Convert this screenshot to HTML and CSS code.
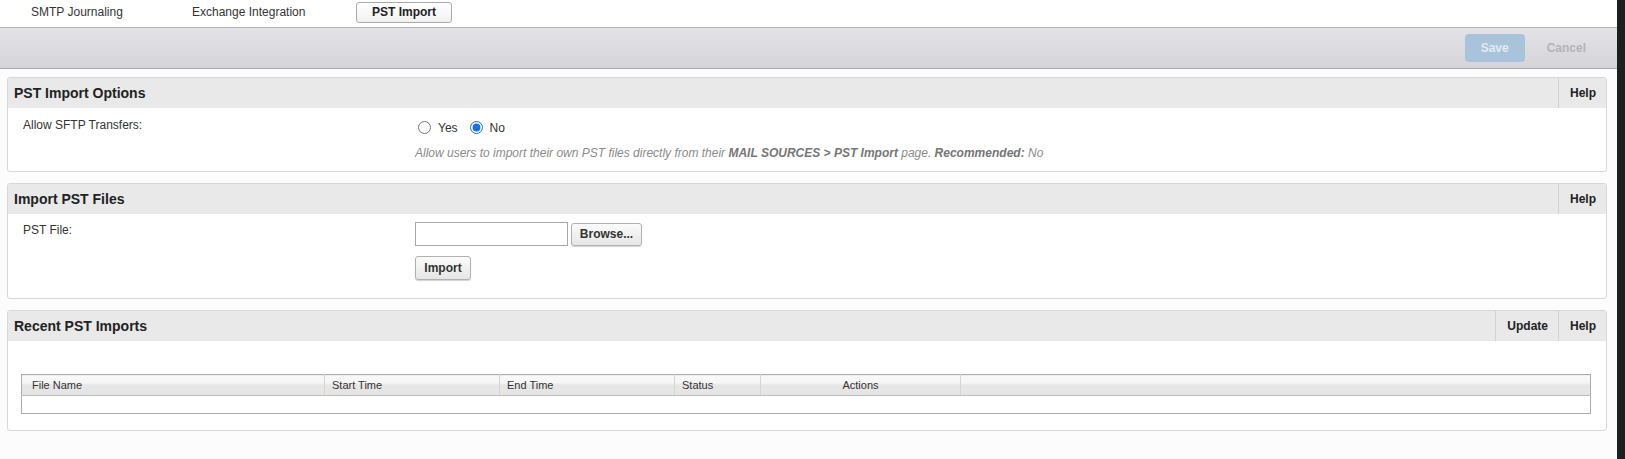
FILE: index.html
```html
<!DOCTYPE html>
<html>
<head>
<meta charset="utf-8">
<title>PST Import</title>
<link rel="stylesheet" href="styles.css">
</head>
<body>
<div class="page">
  <nav class="tabs">
    <span class="tab">SMTP Journaling</span>
    <span class="tab">Exchange Integration</span>
    <span class="tab tab-active">PST Import</span>
  </nav>
  <div class="toolbar">
    <button class="btn-save" type="button">Save</button>
    <button class="btn-cancel" type="button">Cancel</button>
  </div>
  <main class="main">
    <section class="panel">
      <header class="panel-head">
        <h2 class="panel-title">PST Import Options</h2>
        <a class="head-link">Help</a>
      </header>
      <div class="panel-body form-grid body-options">
        <div class="field-label">Allow SFTP Transfers:</div>
        <div class="field-value">
          <div class="radio-row">
            <label class="radio"><input type="radio" name="sftp"> Yes</label>
            <label class="radio"><input type="radio" name="sftp" checked> No</label>
          </div>
          <p class="hint">Allow users to import their own PST files directly from their <b>MAIL SOURCES &gt; PST Import</b> page. <b>Recommended:</b> No</p>
        </div>
      </div>
    </section>

    <section class="panel">
      <header class="panel-head">
        <h2 class="panel-title">Import PST Files</h2>
        <a class="head-link">Help</a>
      </header>
      <div class="panel-body form-grid body-import">
        <div class="field-label">PST File:</div>
        <div class="field-value">
          <div class="file-row">
            <input class="file-input" type="text">
            <button class="btn btn-browse" type="button">Browse...</button>
          </div>
          <button class="btn btn-import" type="button">Import</button>
        </div>
      </div>
    </section>

    <section class="panel">
      <header class="panel-head">
        <h2 class="panel-title">Recent PST Imports</h2>
        <a class="head-link">Update</a>
        <a class="head-link">Help</a>
      </header>
      <div class="panel-body body-recent">
        <table class="grid">
          <colgroup>
            <col class="c-name"><col class="c-start"><col class="c-end"><col class="c-status"><col class="c-actions"><col>
          </colgroup>
          <thead>
            <tr>
              <th class="first">File Name</th>
              <th>Start Time</th>
              <th>End Time</th>
              <th>Status</th>
              <th class="center">Actions</th>
              <th class="last"></th>
            </tr>
          </thead>
          <tbody>
            <tr class="empty-row"><td colspan="6"></td></tr>
          </tbody>
        </table>
      </div>
    </section>
  </main>
</div>
<div class="edge"></div>
</body>
</html>
```

FILE: styles.css
```css
* { box-sizing: border-box; }
html, body { margin: 0; padding: 0; }
body {
  display: flex;
  min-height: 100vh;
  background: #fcfcfc;
  font-family: "Liberation Sans", Arial, sans-serif;
  font-size: 12px;
  color: #333;
}
.page { width: 1617px; flex: none; }
.edge { flex: 1; background: #1b1f20; }

.tabs {
  height: 27px;
  padding: 2px 0 0 31px;
  display: grid;
  grid-template-columns: 161px 164px 96px;
  align-items: start;
  background: #fff;
}
.tab { line-height: 21px; color: #333; }
.tab-active {
  height: 21px;
  line-height: 19px;
  border: 1px solid #a9a9a9;
  border-radius: 3px;
  background: linear-gradient(#ffffff, #f1f1f1);
  font-weight: bold;
  text-align: center;
  color: #222;
}

.toolbar {
  height: 42px;
  border-top: 1px solid #b3b3b6;
  border-bottom: 1px solid #acacaf;
  background: linear-gradient(#e3e3e7, #d4d4d9);
  display: flex;
  align-items: center;
  justify-content: flex-end;
  gap: 10px;
  padding-right: 19px;
}
.btn-save {
  width: 60px;
  height: 28px;
  border: 0;
  border-radius: 4px;
  background: #a9c3db;
  color: #e3eaf2;
  font: bold 12px "Liberation Sans", Arial, sans-serif;
}
.btn-cancel {
  height: 28px;
  padding: 0 12px;
  border: 0;
  background: transparent;
  color: #b4b4b8;
  font: bold 12px "Liberation Sans", Arial, sans-serif;
}

.main { padding: 8px 10px 0 7px; }
.panel {
  border: 1px solid #d7d7d7;
  border-radius: 3px;
  background: #fff;
  margin-bottom: 11px;
}
.panel-head {
  height: 30px;
  background: #e9e9e9;
  display: flex;
  align-items: stretch;
}
.panel-title {
  flex: 1;
  margin: 0;
  padding-left: 6px;
  font-size: 14px;
  font-weight: bold;
  line-height: 30px;
  color: #222;
}
.head-link {
  border-left: 1px solid #d2d2d2;
  padding: 0 10px 0 11px;
  line-height: 30px;
  font-weight: bold;
  color: #222;
}

.form-grid {
  display: grid;
  grid-template-columns: 392px 1fr;
  padding-left: 15px;
}
.field-label { line-height: 15px; color: #333; }

.body-options { padding-top: 10px; padding-bottom: 10px; }
.radio-row {
  height: 19px;
  display: flex;
  align-items: center;
}
.radio { display: flex; align-items: center; margin-right: 9px; }
.radio input { margin: 0 7px 0 3px; width: 13px; height: 13px; accent-color: #1473e6; }
.hint {
  margin: 9px 0 0;
  line-height: 15px;
  font-style: italic;
  color: #8a8a8a;
}
.hint b { color: #767676; }

.body-import { padding-top: 8px; padding-bottom: 18px; }
.body-import .field-label { padding-top: 1px; }
.file-row { display: flex; align-items: center; gap: 3px; height: 24px; margin-bottom: 10px; }
.file-input {
  width: 153px;
  height: 24px;
  border: 1px solid #a8a8a8;
  background: #fff;
  margin: 0;
}
.btn {
  display: block;
  height: 23px;
  padding: 0 7px;
  border: 1px solid #b1b1b1;
  border-radius: 3px;
  background: linear-gradient(#fbfbfb, #e6e6e6);
  box-shadow: 0 1px 1px rgba(0, 0, 0, 0.18);
  font: bold 12px "Liberation Sans", Arial, sans-serif;
  color: #333;
}
.btn-browse { width: 71px; }
.btn-import { width: 56px; height: 24px; }

.body-recent { padding: 33px 15px 16px 13px; }
.grid {
  width: 100%;
  border-collapse: collapse;
  table-layout: fixed;
  border: 1px solid #ababab;
}
.c-name { width: 303px; }
.c-start { width: 175px; }
.c-end { width: 175px; }
.c-status { width: 86px; }
.c-actions { width: 200px; }
.grid th {
  height: 21px;
  padding: 0 7px;
  text-align: left;
  font-weight: normal;
  font-size: 11px;
  color: #333;
  background: linear-gradient(#f9f9f9 0%, #f4f4f4 40%, #e7e7e7 45%, #e4e4e4 100%);
  border-right: 1px solid #d5d5d5;
  border-bottom: 1px solid #bdbdbd;
}
.grid th.first { padding-left: 10px; }
.grid th.center { text-align: center; }
.grid th.last { border-right: 0; }
.empty-row td { height: 18px; padding: 0; background: #fff; }
```
